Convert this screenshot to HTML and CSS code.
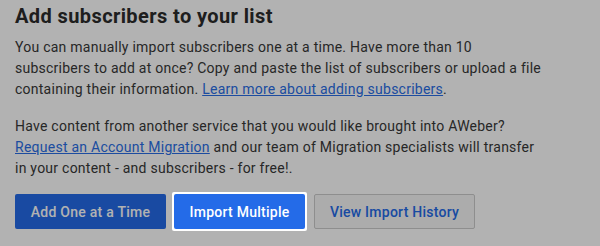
FILE: index.html
```html
<!DOCTYPE html>
<html lang="en">
<head>
    <meta charset="UTF-8">
    <title>Add subscribers</title>
    <link rel="stylesheet" href="styles.css">
</head>
<body>
    <div class="panel">
        <h2 class="panel-title">Add subscribers to your list</h2>
        <p class="panel-text">You can manually import subscribers one at a time. Have more than 10 subscribers to add at once? Copy and paste the list of subscribers or upload a file containing their information. <a href="#">Learn more about adding subscribers</a>.</p>
        <p class="panel-text panel-text-last">Have content from another service that you would like brought into AWeber? <a href="#">Request an Account Migration</a> and our team of Migration specialists will transfer in your content - and subscribers - for free!.</p>

        <div class="actions">
            <button class="btn btn-primary">Add One at a Time</button>
            <div class="spotlight">
                <button class="btn btn-primary">Import Multiple</button>
            </div>
            <button class="btn btn-secondary">View Import History</button>
        </div>
    </div>
</body>
</html>
```

FILE: styles.css
```css
:root {
    --text: #383838;
    --title: #2b2b2b;
    --blue: #246be8;
    --link: #2a6ee6;
}

* {
    margin: 0;
    padding: 0;
    box-sizing: border-box;
}

body {
    background: #ffffff;
    font-family: Roboto, "Liberation Sans", sans-serif;
    color: var(--text);
    min-height: 100vh;
}

.panel {
    padding: 4px 15px 0;
    width: 560px;
}

.panel-title {
    font-size: 20px;
    font-weight: 700;
    letter-spacing: 0.4px;
    color: var(--title);
    line-height: 24px;
    margin-bottom: 9px;
}

.panel-text {
    font-size: 14px;
    letter-spacing: 0.25px;
    line-height: 21px;
    margin-bottom: 16px;
    width: 530px;
}

.panel-text-last {
    margin-bottom: 13px;
}

.panel-text a {
    color: var(--link);
}

.actions {
    display: flex;
    align-items: center;
    gap: 6px;
}

.btn {
    height: 35px;
    font-family: Roboto, "Liberation Sans", sans-serif;
    font-size: 14px;
    font-weight: 500;
    letter-spacing: 0.25px;
    border-radius: 2px;
    cursor: pointer;
}

.btn-primary {
    background: var(--blue);
    color: #ffffff;
    border: none;
    padding: 0 15px;
}

.actions > .btn-primary {
    width: 151px;
}

.spotlight .btn-primary {
    width: 131px;
}

.btn-secondary {
    background: #f6f6f7;
    border: 1px solid #cccccc;
    color: var(--blue);
    width: 161px;
    margin-left: 1px;
}

/* tour highlight: dims everything except the wrapped element */
.spotlight {
    position: relative;
    z-index: 1;
    background: #ffffff;
    padding: 2px;
    border-radius: 2px;
    display: flex;
    box-shadow: 0 0 0 2000px rgba(0, 0, 0, 0.3);
}
```
